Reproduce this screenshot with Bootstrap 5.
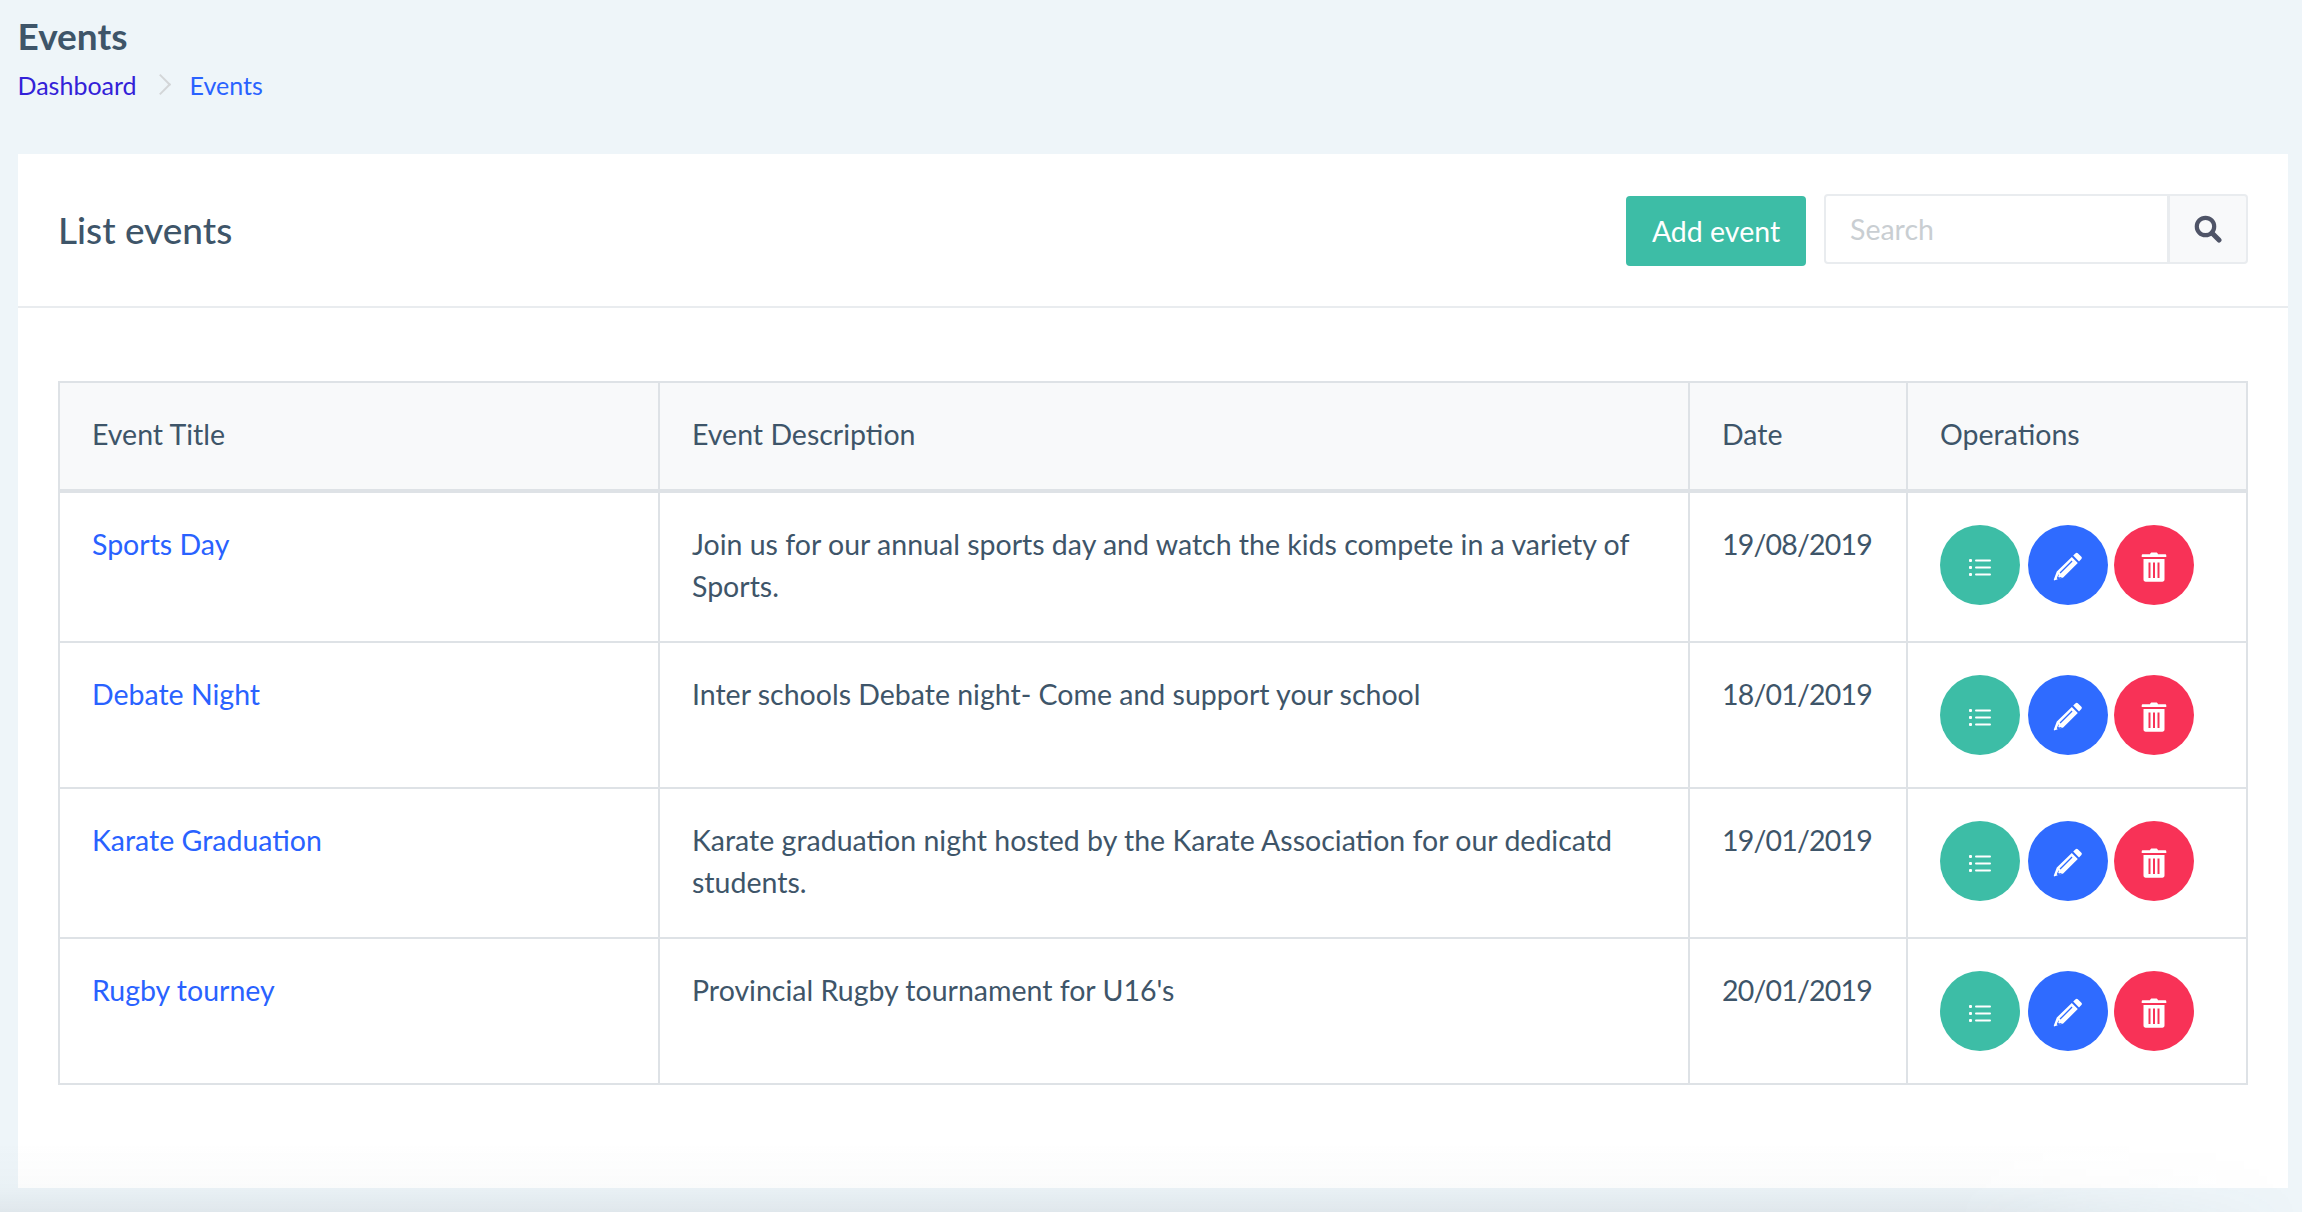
<!DOCTYPE html>
<html lang="en">
  <head>
    <meta charset="UTF-8" />
    <meta name="viewport" content="width=device-width, initial-scale=1.0" />
    <title>Events</title>
    <link
      rel="stylesheet"
      href="https://cdn.jsdelivr.net/npm/bootstrap@5.3.3/dist/css/bootstrap.min.css"
    />
    <script src="https://cdn.jsdelivr.net/npm/bootstrap@5.3.3/dist/js/bootstrap.bundle.min.js"></script>
    <style>
      html, body {
        height: 100%;
      }
      body {
        background: #eef5f9;
        color: #3e5569;
        font-family: "Lato", "Liberation Sans", sans-serif;
        font-size: 28.5px;
        line-height: 42px;
        overflow: hidden;
        position: relative;
      }
      body::after {
        content: "";
        position: absolute;
        left: 0;
        right: 0;
        bottom: 0;
        height: 70px;
        background: linear-gradient(to bottom, rgba(60, 80, 90, 0), rgba(60, 80, 90, 0.025) 65%, rgba(60, 80, 90, 0.08));
        -webkit-mask-image: linear-gradient(to right, #000 85%, transparent);
        mask-image: linear-gradient(to right, #000 85%, transparent);
        pointer-events: none;
      }
      .page-top {
        height: 154px;
        padding: 14px 18px 0 17.5px;
      }
      .page-top h1 {
        font-size: 37px;
        line-height: 44px;
        font-weight: 700;
        margin-bottom: 8px;
      }
      .page-top .breadcrumb {
        font-size: 25px;
        line-height: 38px;
        margin: 0;
        --bs-breadcrumb-item-padding-x: 0;
      }
      .page-top a {
        color: #3321d8;
        text-decoration: none;
      }
      .breadcrumb-item + .breadcrumb-item::before {
        content: "";
        width: 15px;
        height: 15px;
        margin: 11px 22px 0 16px;
        padding: 0;
        border-top: 2px solid #d3d6d8;
        border-right: 2px solid #d3d6d8;
        transform: rotate(45deg);
      }
      .breadcrumb-item.active {
        color: #2962ff;
      }
      .events-card {
        margin: 0 14px 0 18px;
        height: 1034px;
        border: 0;
        border-radius: 0;
      }
      .events-card .card-header {
        height: 154px;
        padding: 0 40px;
        background: #fff;
        border-bottom: 2px solid #e9ecef;
        border-radius: 0;
      }
      .events-card h4 {
        font-size: 37px;
        font-weight: 500;
        margin: 0;
      }
      .btn-add {
        width: 180px;
        height: 70px;
        margin-top: 2px;
        padding: 0;
        font-size: 28.5px;
        background: #3dbda6;
        border: 0;
        border-radius: 4px;
        color: #fff;
      }
      .search-group {
        width: 424px;
        height: 70px;
        margin-left: 18px;
        margin-bottom: 2px;
      }
      .search-group .form-control {
        height: 70px;
        padding: 0 24px;
        font-size: 28.5px;
        border: 2px solid #e9ecef;
        border-radius: 4px 0 0 4px;
      }
      .search-group .form-control::placeholder {
        color: #c9ced2;
      }
      .search-group .input-group-text {
        width: 80px;
        height: 70px;
        justify-content: center;
        padding: 0;
        background: #f8f9fa;
        border: 2px solid #e9ecef;
        border-radius: 0 4px 4px 0;
      }
      .events-card .card-body {
        padding: 73px 40px 0;
      }
      .events-table {
        table-layout: fixed;
        width: 2188px;
        margin: 0;
        color: #3e5569;
        border-color: #dee2e6;
        --bs-table-color: #3e5569;
      }
      .events-table > :not(caption) > * > * {
        border-width: 2px;
        padding: 30px 32px 34px;
        color: #3e5569;
      }
      .events-table thead th {
        background: #f8f9fa;
        font-weight: 400;
        border-bottom-width: 4px;
      }
      .events-table a {
        color: #2962ff;
        text-decoration: none;
      }
      .col-event { width: 600px; }
      .col-desc { width: 1030px; }
      .col-date { width: 218px; }
      .col-ops { width: 340px; }
      .cell-date {
        white-space: nowrap;
        letter-spacing: -0.8px;
      }
      .btn-op {
        width: 80px;
        height: 80px;
        padding: 3px 0 0;
        border: 0;
        display: inline-flex;
        align-items: center;
        justify-content: center;
      }
      .ops {
        gap: 8px;
        margin: 2px 0 -2px;
      }
      .ops .btn-op:last-child {
        margin-left: -2px;
      }
      .op-list { background: #3dbda6; }
      .op-edit { background: #2f6bff; }
      .op-del { background: #f83257; }
    </style>
  </head>

  <body>
    <div class="page-top">
      <h1>Events</h1>
      <nav aria-label="breadcrumb">
        <ol class="breadcrumb">
          <li class="breadcrumb-item"><a href="#">Dashboard</a></li>
          <li class="breadcrumb-item active" aria-current="page">Events</li>
        </ol>
      </nav>
    </div>

    <div class="card events-card">
      <div class="card-header d-flex align-items-center">
        <h4 class="me-auto">List events</h4>
        <button class="btn btn-add" type="button">Add event</button>
        <div class="input-group search-group">
          <input type="text" class="form-control" placeholder="Search" aria-label="Search" />
          <span class="input-group-text">
            <svg width="28" height="28" viewBox="0 0 28 28">
              <circle cx="11.5" cy="11.5" r="8.7" fill="none" stroke="#4f5467" stroke-width="4.2" />
              <path d="M18 18l7 7" stroke="#4f5467" stroke-width="5" stroke-linecap="round" />
            </svg>
          </span>
        </div>
      </div>
      <div class="card-body">
        <table class="table table-bordered events-table">
          <colgroup>
            <col class="col-event" />
            <col class="col-desc" />
            <col class="col-date" />
            <col class="col-ops" />
          </colgroup>
          <thead>
            <tr>
              <th>Event Title</th>
              <th>Event Description</th>
              <th>Date</th>
              <th>Operations</th>
            </tr>
          </thead>
          <tbody id="event_rows"></tbody>
        </table>
      </div>
    </div>

    <script>
      var events = [
        ["Sports Day", "Join us for our annual sports day and watch the kids compete in a variety of Sports.", "19/08/2019"],
        ["Debate Night", "Inter schools Debate night- Come and support your school", "18/01/2019"],
        ["Karate Graduation", "Karate graduation night hosted by the Karate Association for our dedicatd students.", "19/01/2019"],
        ["Rugby tourney", "Provincial Rugby tournament for U16's", "20/01/2019"]
      ];

      var listIcon = `<svg width="24" height="24" viewBox="0 0 24 24" fill="#fff">
        <rect x="1" y="4" width="3" height="3" rx="1" /><rect x="7" y="4.5" width="16" height="2" rx="1" />
        <rect x="1" y="11" width="3" height="3" rx="1" /><rect x="7" y="11.5" width="16" height="2" rx="1" />
        <rect x="1" y="18" width="3" height="3" rx="1" /><rect x="7" y="18.5" width="16" height="2" rx="1" />
      </svg>`;

      var editIcon = `<svg width="30" height="30" viewBox="0 0 30 30" fill="#fff">
        <path fill-rule="evenodd" d="M22.6 1.2a1.6 1.6 0 0 1 2.2 0l3.6 3.6a1.6 1.6 0 0 1 0 2.2l-2.4 2.4-5.8-5.8zM18.8 5l6 6L10.2 25.6 1 28.6 0.8 27.6 3.8 19.6zM18.6 8.6L6.6 20.6l.9.9 12-12zM5.4 22.4l-1.6 3.9 1 1 3.9-1.6-.5-.8-2.2.7-.8-.8.7-2z" />
      </svg>`;

      var trashIcon = `<svg width="26" height="30" viewBox="0 0 26 30" fill="#fff">
        <path d="M9 2.2C9.3 1 10 .5 11 .5h4c1 0 1.700.5 2 1.700H24c.800 0 1.300.500 1.300 1.200v1.700H.700V3.400C.700 2.700 1.200 2.200 2 2.200z" />
        <path fill-rule="evenodd" d="M2.500 7h21v20.500c0 1.300-.900 2.200-2.200 2.200H4.700c-1.300 0-2.200-.900-2.200-2.200zM7.500 10.500v15.500h2V10.500zM12 10.500v15.500h2V10.500zM16.500 10.500v15.500h2V10.500z" />
      </svg>`;

      var rows = "";
      events.forEach(function (ev) {
        rows += `<tr>
          <td><a href="#">${ev[0]}</a></td>
          <td>${ev[1]}</td>
          <td class="cell-date">${ev[2]}</td>
          <td>
            <div class="d-flex ops">
              <button type="button" class="btn rounded-circle btn-op op-list" aria-label="Details">${listIcon}</button>
              <button type="button" class="btn rounded-circle btn-op op-edit" aria-label="Edit">${editIcon}</button>
              <button type="button" class="btn rounded-circle btn-op op-del" aria-label="Delete">${trashIcon}</button>
            </div>
          </td>
        </tr>`;
      });
      document.getElementById("event_rows").innerHTML = rows;
    </script>
  </body>
</html>
